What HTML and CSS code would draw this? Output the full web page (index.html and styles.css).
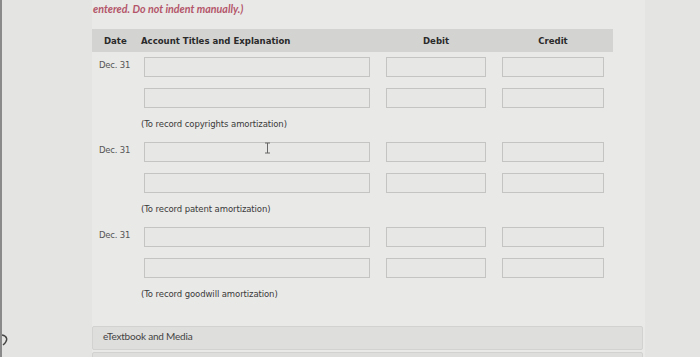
FILE: index.html
```html
<!DOCTYPE html>
<html lang="en">
<head>
    <meta charset="UTF-8">
    <meta name="viewport" content="width=device-width, initial-scale=1.0">
    <title>Journal Entry</title>
    <link rel="stylesheet" href="styles.css">
</head>
<body>
    <div class="frame">
        <svg class="bezel" width="10" height="14" viewBox="0 0 10 14">
            <path d="M1 2 C6 3, 8 7, 2 12" fill="none" stroke="#444" stroke-width="1.4"/>
        </svg>

        <section class="question">
            <p class="hint">entered. Do not indent manually.)</p>

            <div class="journal">
                <div class="journal_head">
                    <span class="h_date">Date</span>
                    <span class="h_account">Account Titles and Explanation</span>
                    <span class="h_num">Debit</span>
                    <span class="h_num">Credit</span>
                </div>

                <!-- copyrights -->
                <div class="row">
                    <span class="date">Dec. 31</span>
                    <div class="input"></div>
                    <div class="input"></div>
                    <div class="input"></div>
                </div>
                <div class="row">
                    <span class="date"></span>
                    <div class="input"></div>
                    <div class="input"></div>
                    <div class="input"></div>
                </div>
                <p class="note">(To record copyrights amortization)</p>

                <!-- patent -->
                <div class="row">
                    <span class="date">Dec. 31</span>
                    <div class="input">
                        <svg class="cursor" width="7" height="12" viewBox="0 0 7 12">
                            <path d="M1 1 H6 M3.5 1 V11 M1 11 H6" fill="none" stroke="#666" stroke-width="1"/>
                        </svg>
                    </div>
                    <div class="input"></div>
                    <div class="input"></div>
                </div>
                <div class="row">
                    <span class="date"></span>
                    <div class="input"></div>
                    <div class="input"></div>
                    <div class="input"></div>
                </div>
                <p class="note">(To record patent amortization)</p>

                <!-- goodwill -->
                <div class="row">
                    <span class="date">Dec. 31</span>
                    <div class="input"></div>
                    <div class="input"></div>
                    <div class="input"></div>
                </div>
                <div class="row">
                    <span class="date"></span>
                    <div class="input"></div>
                    <div class="input"></div>
                    <div class="input"></div>
                </div>
                <p class="note">(To record goodwill amortization)</p>
            </div>

            <div class="media">eTextbook and Media</div>
            <div class="media next"></div>
        </section>
    </div>
</body>
</html>
```

FILE: styles.css
```css
*{
    padding: 0;
    margin: 0;
    box-sizing: border-box;
}
body{
    width: 700px;
    height: 357px;
    overflow: hidden;
    background: #e4e4e2;
    font-family: 'DejaVu Sans', sans-serif;
    color: #333;
}
.frame{
    position: relative;
    height: 100%;
    overflow: hidden;
    border-left: 2px solid #8a8a8a;
    padding-left: 90px;
}
.bezel{
    position: absolute;
    left: -1px;
    top: 333px;
}
.question{
    width: 553px;
    height: 100%;
    background: #e9e9e7;
}
.hint{
    padding: 2px 0 0 1px;
    height: 29px;
    font-family: 'Lato', sans-serif;
    font-style: italic;
    font-weight: bold;
    font-size: 10.7px;
    color: #b4566a;
}

/* journal table */
.journal_head, .row{
    display: grid;
    grid-template-columns: 36px 226px 100px 102px;
    column-gap: 16px;
    width: 521px;
}
.journal_head{
    height: 23px;
    align-items: center;
    background: #d3d3d2;
    font-family: 'DejaVu Sans Condensed', 'DejaVu Sans', sans-serif;
    font-stretch: condensed;
    font-size: 9.5px;
    font-weight: bold;
    color: #2a2a2a;
}
.h_date{
    padding-left: 12px;
}
.h_account{
    margin-left: -3px;
}
.h_num{
    text-align: center;
}
.row{
    margin-top: 11px;
    height: 20px;
}
.journal_head + .row{
    margin-top: 5px;
}
.date{
    padding: 3px 0 0 7px;
    font-size: 8.5px;
    color: #555;
    letter-spacing: -0.2px;
    white-space: nowrap;
}
.input{
    position: relative;
    border: 1px solid #c4c4c2;
    background: #e7e7e5;
}
.cursor{
    position: absolute;
    left: 119px;
    top: -1px;
}
.note{
    height: 23px;
    padding: 11px 0 0 49px;
    font-size: 8.5px;
    color: #3a3a3a;
    letter-spacing: -0.1px;
}

/* footer bars */
.media{
    margin-top: 25px;
    width: 551px;
    height: 24px;
    padding: 3px 0 0 10px;
    border: 1px solid #d2d2d0;
    border-radius: 2px;
    background: #dededc;
    font-family: 'Lato', sans-serif;
    font-size: 10px;
    color: #444;
    letter-spacing: -0.2px;
}
.media.next{
    margin-top: 2px;
}
```
